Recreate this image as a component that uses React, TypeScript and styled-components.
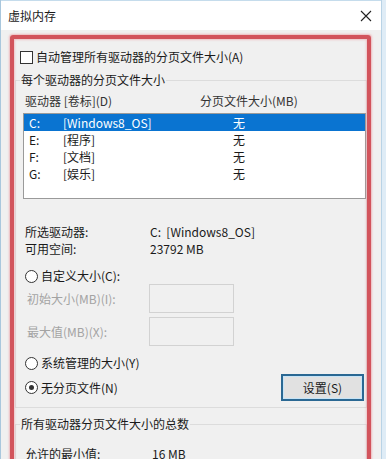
import React from 'react';
import styled, { createGlobalStyle } from 'styled-components';

const GlobalStyle = createGlobalStyle`
  html, body {
    margin: 0;
    padding: 0;
    background: #dfecf6;
  }
  body {
    font-family: "Noto Sans CJK SC", "Noto Sans", "Liberation Sans", sans-serif;
    font-size: 12px;
    color: #1a1a1a;
  }
`;

const Page = styled.div`
  position: relative;
  width: 386px;
  height: 459px;
  overflow: hidden;
`;

const Window = styled.div`
  width: 380px;
  height: 459px;
  border-left: 1px solid #a9c7dd;
  border-right: 1px solid #b9d3e6;
  background: #f0f0f0;
`;

const TitleBar = styled.div`
  height: 30px;
  box-sizing: border-box;
  border-top: 1px solid #c5dcec;
  background: #ffffff;
  display: flex;
  align-items: center;
  justify-content: space-between;
  padding: 0 9px 0 7px;
  font-size: 12px;
`;

const Body = styled.div`
  padding: 0 14px 0 14px;
`;

const CheckRow = styled.label`
  display: flex;
  align-items: center;
  gap: 3px;
  height: 14px;
  margin: 20px 0 0 5px;
  line-height: 14px;
`;

const CheckBox = styled.span`
  width: 11px;
  height: 11px;
  border: 1px solid #333;
  background: #fff;
  flex: none;
`;

const Group = styled.fieldset<{ $pad: number }>`
  margin: 8px 0 0 0;
  padding: 0 0 ${p => p.$pad}px 0;
  border: 1px solid #dcdcdc;
  min-width: 0;
`;

const Legend = styled.legend`
  margin-left: 4px;
  padding: 0 1px;
  line-height: 16px;
`;

const HeaderRow = styled.div`
  display: flex;
  height: 16px;
  line-height: 16px;
  margin-top: 5px;
  padding-left: 9px;
  color: #333;
`;

const Col = styled.span<{ $w: number }>`
  width: ${p => p.$w}px;
  flex: none;
  white-space: nowrap;
`;

const ListBox = styled.div`
  margin: 4px 0 0 7px;
  height: 86px;
  box-sizing: border-box;
  border: 1px solid #9a9a9a;
  background: #fff;
`;

const ListRow = styled.div<{ $sel?: boolean }>`
  display: flex;
  height: 17px;
  line-height: 17px;
  padding-left: 5px;
  background: ${p => (p.$sel ? '#0a74d1' : 'transparent')};
  color: ${p => (p.$sel ? '#fff' : '#1a1a1a')};
`;

const InfoRow = styled.div<{ $mt?: number }>`
  display: flex;
  height: 17px;
  line-height: 17px;
  margin-top: ${p => p.$mt ?? 0}px;
  padding-left: 9px;
`;

const RadioRow = styled.label<{ $mt: number }>`
  display: flex;
  align-items: center;
  gap: 3px;
  height: 16px;
  line-height: 16px;
  margin: ${p => p.$mt}px 0 0 9px;
`;

const Radio = styled.span<{ $on?: boolean }>`
  width: 11px;
  height: 11px;
  border: 1px solid #333;
  border-radius: 50%;
  background: #fff;
  display: flex;
  align-items: center;
  justify-content: center;
  flex: none;
  &::after {
    content: '';
    width: 5px;
    height: 5px;
    border-radius: 50%;
    background: ${p => (p.$on ? '#333' : 'transparent')};
  }
`;

const SizeRow = styled.div<{ $mt: number }>`
  display: flex;
  align-items: center;
  height: 29px;
  margin-top: ${p => p.$mt}px;
  padding-left: 11px;
  color: #a3a3a3;
`;

const SizeInput = styled.div`
  width: 85px;
  height: 29px;
  box-sizing: border-box;
  border: 1px solid #d2d2d2;
  background: #f0f0f0;
`;

const ActionRow = styled.div`
  display: flex;
  align-items: center;
  justify-content: space-between;
  height: 27px;
  margin: 3px 2px 0 9px;
`;

const RadioLabel = styled.span`
  display: flex;
  align-items: center;
  gap: 3px;
`;

const Button = styled.button`
  width: 83px;
  height: 27px;
  border: 2px solid #2a6893;
  box-shadow: inset 0 0 0 1px #c6e4f7;
  background: #e1e1e1;
  font-family: inherit;
  font-size: 12px;
  color: #1a1a1a;
  padding: 0;
`;

const RedFrame = styled.div`
  position: absolute;
  left: 10px;
  top: 35px;
  width: 361px;
  height: 440px;
  box-sizing: border-box;
  border: 4px solid #d2545c;
  border-radius: 3px;
  box-shadow: 0 0 2px 1px rgba(236, 140, 148, 0.55), inset 0 0 2px 1px rgba(236, 140, 148, 0.45);
  pointer-events: none;
`;

const drives = [
  { d: 'C:', label: '[Windows8_OS]', size: '无', sel: true },
  { d: 'E:', label: '[程序]', size: '无' },
  { d: 'F:', label: '[文档]', size: '无' },
  { d: 'G:', label: '[娱乐]', size: '无' },
];

export default function App() {
  return (
    <Page>
      <GlobalStyle />
      <Window>
        <TitleBar>
          <span>虚拟内存</span>
          <svg width="12" height="12" viewBox="0 0 12 12">
            <path d="M1 1 L11 11 M11 1 L1 11" stroke="#222" strokeWidth="1.1" />
          </svg>
        </TitleBar>
        <Body>
          <CheckRow>
            <CheckBox />
            自动管理所有驱动器的分页文件大小(A)
          </CheckRow>

          <Group $pad={6}>
            <Legend>每个驱动器的分页文件大小</Legend>
            <HeaderRow>
              <Col $w={175}>驱动器 [卷标](D)</Col>
              <Col $w={120}>分页文件大小(MB)</Col>
            </HeaderRow>
            <ListBox>
              {drives.map(r => (
                <ListRow key={r.d} $sel={r.sel}>
                  <Col $w={34}>{r.d}</Col>
                  <Col $w={170}>{r.label}</Col>
                  <Col $w={20}>{r.size}</Col>
                </ListRow>
              ))}
            </ListBox>

            <InfoRow $mt={24}>
              <Col $w={125}>所选驱动器:</Col>
              <Col $w={140}>C:&nbsp;&nbsp;[Windows8_OS]</Col>
            </InfoRow>
            <InfoRow>
              <Col $w={125}>可用空间:</Col>
              <Col $w={140}>23792 MB</Col>
            </InfoRow>

            <RadioRow $mt={11}>
              <Radio />
              自定义大小(C):
            </RadioRow>
            <SizeRow $mt={0}>
              <Col $w={122}>初始大小(MB)(I):</Col>
              <SizeInput />
            </SizeRow>
            <SizeRow $mt={4}>
              <Col $w={122}>最大值(MB)(X):</Col>
              <SizeInput />
            </SizeRow>

            <RadioRow $mt={9}>
              <Radio />
              系统管理的大小(Y)
            </RadioRow>
            <ActionRow>
              <RadioLabel>
                <Radio $on />
                无分页文件(N)
              </RadioLabel>
              <Button>设置(S)</Button>
            </ActionRow>
          </Group>

          <Group $pad={10}>
            <Legend>所有驱动器分页文件大小的总数</Legend>
            <InfoRow $mt={13}>
              <Col $w={127}>允许的最小值:</Col>
              <Col $w={80}>16 MB</Col>
            </InfoRow>
          </Group>
        </Body>
      </Window>
      <RedFrame />
    </Page>
  );
}
